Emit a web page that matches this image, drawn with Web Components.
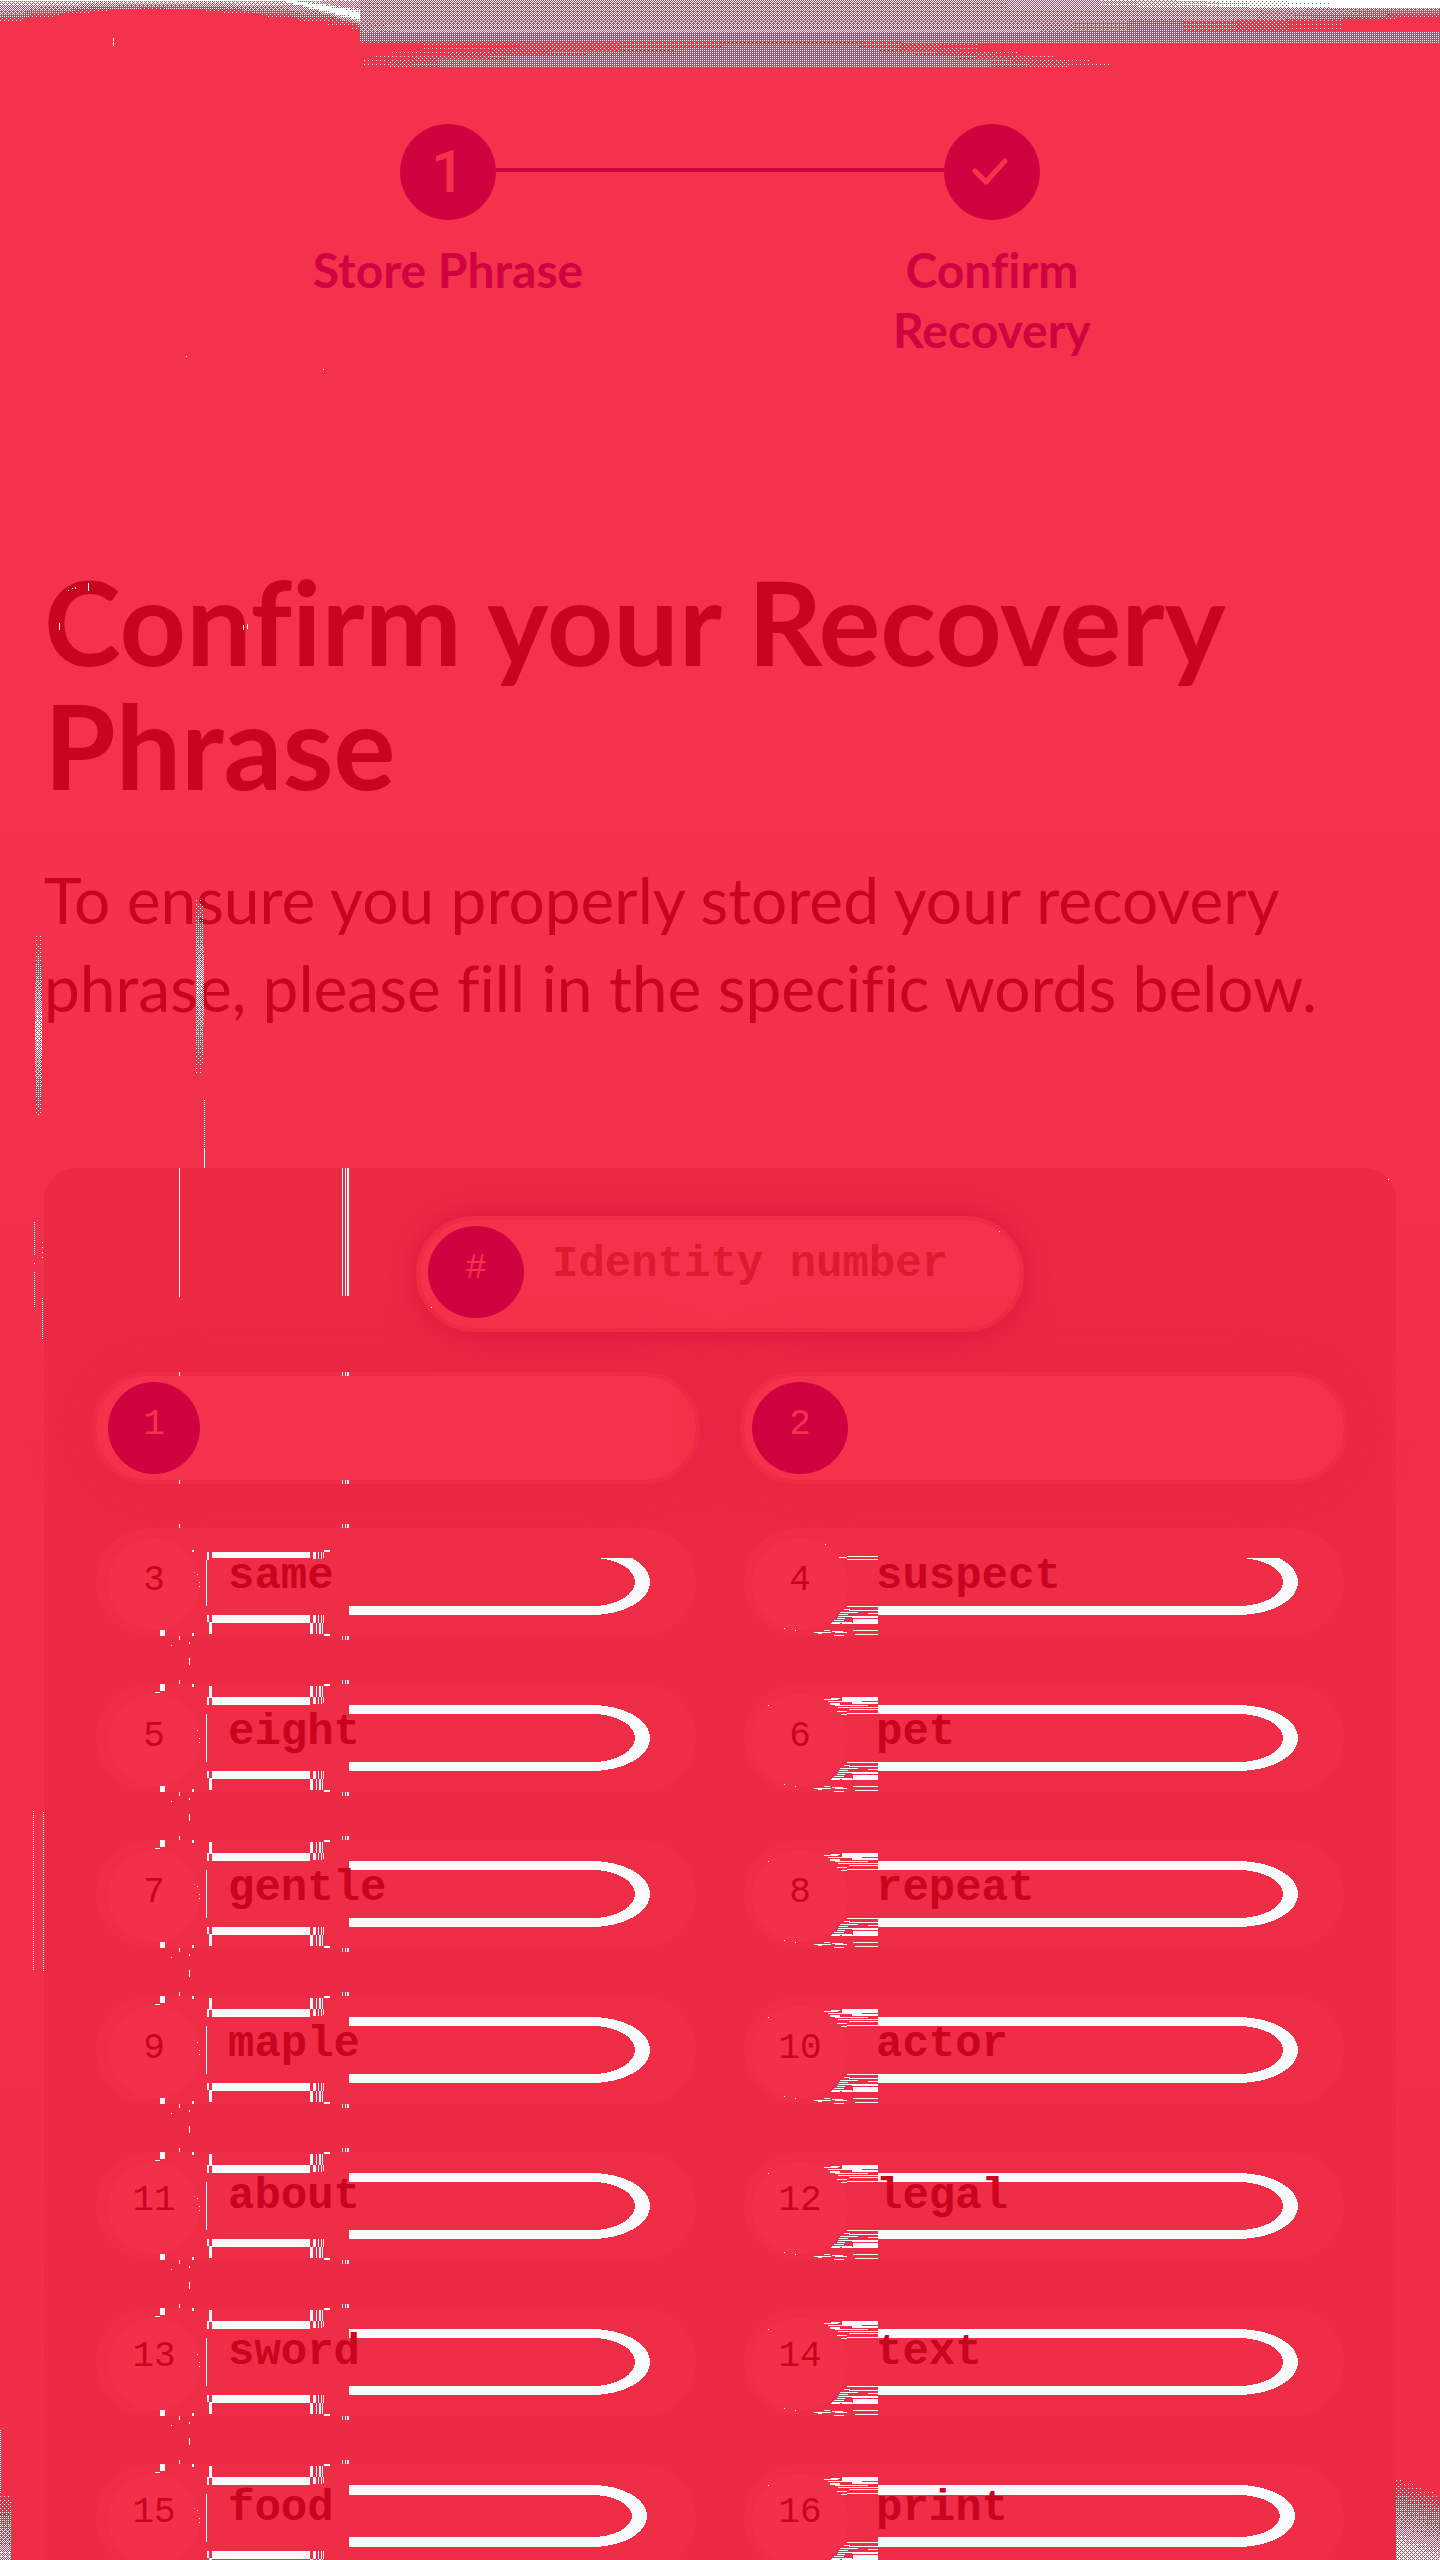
<!DOCTYPE html>
<html lang="en">
<head>
<meta charset="utf-8">
<meta name="viewport" content="width=device-width, initial-scale=1">
<title>Confirm your Recovery Phrase</title>
<style>
html,body{margin:0;height:100%}
body{font-family:Lato,"Open Sans",sans-serif;font-variant-ligatures:none;background:#f5324b;overflow:hidden}
</style>
</head>
<body>
<recovery-page></recovery-page>
<script>
class BaseElement extends HTMLElement{
  constructor(){super();this.attachShadow({mode:'open'});}
  draw(html){this.shadowRoot.innerHTML=html;}
}

/* Two-step progress indicator */
class StepProgress extends BaseElement{
  connectedCallback(){this.draw(`<style>
    :host{display:block;color:#cf0340}
    .rail{display:flex;align-items:center;width:640px;max-width:100%;margin:0 auto}
    .dot{width:96px;height:96px;border-radius:50%;background:#cf0340;color:#f5324b;display:flex;align-items:center;justify-content:center;font:500 60px/96px Roboto,sans-serif}
    .line{flex:1;height:4px;background:#cf0340;margin-bottom:4px}
    .labels{display:grid;grid-template-columns:1fr 1fr;max-width:1088px;margin:20px auto 0;font-size:48px;line-height:60px;font-weight:700;text-align:center}
    .labels span{padding:0 120px}
    svg{width:40px;height:32px}
  </style>
  <div class="rail"><div class="dot">1</div><div class="line"></div><div class="dot"><svg viewBox="0 0 40 32" fill="none" stroke="#f5324b" stroke-width="5" stroke-linecap="round" stroke-linejoin="round"><path d="M3 15 14 26 33 5"/></svg></div></div>
  <div class="labels"><span>Store Phrase</span><span>Confirm Recovery</span></div>`);}
}

/* Numbered pill with a text box */
class WordField extends BaseElement{
  connectedCallback(){
    const mark=this.getAttribute('mark'),value=this.getAttribute('value')||'',hint=this.getAttribute('hint')||'';
    const n=+mark,even=n%2===0,filled=value!=='';
    const kind=filled?'filled':(hint?'identity':'empty');
    this.draw(`<style>
    :host{display:block;min-width:0}
    .pill{position:relative;display:flex;align-items:flex-start;box-sizing:border-box;height:112px;padding:6px 16px 0 12px;border:4px solid #ef2c45;border-radius:58px;background:#f5324b;background-clip:padding-box}
    .right{padding-left:8px}
    .empty{box-shadow:0 0 72px rgba(220,20,64,.32)}
    .identity{height:116px;padding-left:8px;box-shadow:0 0 36px rgba(205,0,64,.55)}
    .filled{height:108px;margin:4px;border:0;padding-top:10px;background:#f02d46}
    label{flex:none;box-sizing:border-box;width:92px;height:92px;padding-bottom:8px;border-radius:50%;display:flex;align-items:center;justify-content:center;background:#cf0340;color:#f5324b;font:36px "Liberation Mono",monospace}
    .right label,.identity label{width:96px}
    .filled label{background:#f3304a;color:#c8041e}
    input{flex:1;min-width:0;box-sizing:border-box;height:96px;margin:0 0 0 28px;padding:0 0 20px;border:0;outline:0;background:none;color:#c8041e;font:bold 44px "Liberation Mono",monospace;position:relative}
    .late label{padding-bottom:16px}
    .late input{padding-bottom:28px}
    input::placeholder{color:#dc1a30;opacity:1}
    svg{position:absolute;left:-4px;top:-4px;width:608px;height:116px;overflow:visible;fill:#f9fafc;pointer-events:none}
    </style>
    <div class="pill ${kind} ${even?'right':''} ${n>10?'late':''}">
      ${this.marks(kind,n,even)}
      <label for="f">${mark}</label><input id="f" type="text" value="${value}" placeholder="${hint}" autocomplete="off">
    </div>`);
  }
  /* white streaks behind the word, in a 608x116 box */
  marks(kind,n,even){
    if(kind==='identity')return '';
    if(kind==='empty')return even?'':`<svg viewBox="0 0 608 116" shape-rendering="crispEdges"><path d="M87 0h1v4h-1zM250 0h1v4h-1zM253 0h1v4h-1zM255 0h2v4h-2zM87 108h1v4h-1zM250 108h1v4h-1zM253 108h1v4h-1zM255 108h2v4h-2z"/></svg>`;
    const first=n<5,last=n>14,t=25,b=last?87:91,w=last?10:9,cx=even?498:500,ex=last?555:558,x=even?138:257;
    const rx=ex-cx,ry=(b-t)/2,ix=rx-15,iy=ry-w;
    const loop=`<path clip-path="url(#c)" d="M${x} ${t}H${cx}A${rx} ${ry} 0 0 1 ${cx} ${b}H${x}v-${w}H${cx}A${ix} ${iy} 0 0 0 ${cx} ${t+w}H${x}z"/>`;
    const clip=`<clipPath id="c"><path d="${first?`M500 34H608V116H0V60H500z`:'M0 0H608V116H0z'}"/></clipPath>`;
    let bits;
    if(even){
      const low='M107 82h31v1h-31zM104 85h6v1h-6zM109 86h29v1h-29zM100 88h18v1h-18zM99 90h9v1h-9zM128 89h10v1h-10zM98 92h38v1h-38zM97 94h8v1h-8zM112 92h26v2h-26zM94 96h10v1h-10zM92 98h20v1h-20zM113 95h25v4h-25zM91 99h9v1h-9zM102 99h36v1h-36zM84 106h6v1h-6zM113 106h25v1h-25zM92 107h11v1h-11zM74 108h17v1h-17zM78 109h4v1h-4zM95 108h12v1h-12zM115 110h23v1h-23zM94 111h10v1h-10zM44 104h1v1h-1zM55 106h1v1h-1z';
      const top=first?'M99 33h8v1h-8zM107 32h31v1h-31zM107 35h31v1h-31zM85 20h1v1h-1z':'M102 17h36v4h-36zM91 18h9v1h-9zM84 19h14v1h-14zM88 21h34v1h-34zM112 22h26v2h-26zM90 23h10v2h-10zM95 25h33v1h-33zM98 27h40v1h-40zM109 29h29v1h-29zM97 31h10v1h-10zM107 33h31v1h-31zM101 34h6v1h-6zM28 25h1v1h-1z';
      bits=low+top;
    }else{
      const e=first?28:17;
      bits=`M115 ${e}h2v8h-2zM120 ${e}h98v${first?6:8}h-98zM221 ${e}h3v7h-3zM226 ${e}h1v7h-1zM229 ${e}h1v7h-1zM231 ${e}h1v6h-1z`
      +`M115 91h2v7h-2zM120 91h98v8h-98zM221 91h3v8h-3zM226 91h1v8h-1zM229 91h1v8h-1zM231 91h1v8h-1z`
      +`M117 98h3v12h-3zM218 99h3v11h-3zM224 99h1v11h-1zM227 99h2v11h-2zM230 99h1v11h-1zM232 110h6v2h-6z`
      +`M114 ${first?36:34}h1v${first?46:48}h-1zM68 106h5v6h-5zM100 109h2v3h-2zM105 50h1v1h-1zM107 58h1v1h-1zM107 62h1v1h-1z`
      +(first?'M232 26h6v2h-6zM100 26h2v2h-2z':'M117 6h3v12h-3zM218 6h3v11h-3zM224 6h1v11h-1zM227 6h2v11h-2zM230 6h1v11h-1zM232 4h6v2h-6zM68 4h5v7h-5zM63 12h5v1h-5zM100 4h2v3h-2z')
      +'M87 0h1v4h-1zM250 0h1v4h-1zM253 0h1v4h-1zM255 0h2v4h-2zM87 112h1v4h-1zM250 112h1v4h-1zM253 112h1v4h-1zM255 112h2v4h-2zM97 118h1v2h-1zM79 121h1v1h-1zM97 134h1v7h-1z';
    }
    return `<svg viewBox="0 0 608 116" shape-rendering="crispEdges">${clip}${loop}<path d="${bits}"/></svg>`;
  }
}

/* Rounded panel that holds the word fields */
class PhraseCard extends BaseElement{
  connectedCallback(){this.draw(`<style>
    :host{display:block;background:#ed2a44;border-radius:32px 32px 0 0;padding:48px}
    .top{width:50%;max-width:608px;margin:0 auto 40px}
    .grid{display:grid;grid-template-columns:1fr 1fr;gap:40px}
    .streaks{position:absolute;width:400px;height:130px;margin:-48px 0 0 -48px;fill:#fff}
  </style>
  <svg class="streaks" viewBox="0 0 400 130" shape-rendering="crispEdges"><path d="M135 0h1v129h-1zM298 0h1v128h-1zM301 0h1v128h-1zM303 0h2v128h-2z"/></svg>
  <div class="top"><slot name="identity"></slot></div>
  <div class="grid"><slot></slot></div>`);}
}

/* Dithered white grain laid over the page */
class GrainLayer extends BaseElement{
  connectedCallback(){
    this.draw(`<style>:host{position:absolute;inset:0;pointer-events:none}canvas{display:block}</style><canvas></canvas>`);
    const c=this.shadowRoot.querySelector('canvas'),W=c.width=innerWidth,H=c.height=innerHeight,g=c.getContext('2d');
    g.fillStyle='#fff';
    const B=[0,8,2,10,12,4,14,6,3,11,1,9,15,7,13,5];
    const dot=(x0,y0,x1,y1,f)=>{for(let y=y0;y<y1;y++)for(let x=x0;x<x1;x++)if(f(x,y)*16>B[(y&3)*4+(x&3)]+.5)g.fillRect(x,y,1,1);};
    const clamp=v=>Math.max(0,Math.min(1,v));
    dot(0,0,360,36,(x,y)=>{
      const edge=x<150?24-14*Math.sin(x/150*Math.PI/2):10+22*Math.pow((x-150)/210,2);
      const wedge=x>285?clamp(1-Math.abs(y-(x-285)*.2)/(4+(x-285)*.11))*1.2:0;
      return clamp(Math.max((edge-y)/edge*.75*(x>320?.75:1),wedge));
    });
    dot(360,0,W,8,(x,y)=>(x<1000?.38:.38+clamp((x-1000)/400)*.62)+(y&1)*.08);
    dot(360,8,W,20,(x,y)=>x<1250?.42:.42*clamp(1-(x-1250)/190*clamp((y-8)/9)));
    dot(360,20,W,32,(x,y)=>x<1040?.38+.15*(y-20)/12*clamp((x-360)/60):.38*clamp(1-(x-1040)/330));
    dot(360,32,W,43,(x,y)=>x>900||y<40?(y%2===0&&x%2===0?1:0):.16);
    dot(360,43,1145,67,(x,y)=>{
      if(y%2)return 0;
      const low=clamp((y-48)/14);
      return .25*clamp((x-370)/(400-300*low)+low*.2)*clamp((1000+130*low-x)/160);
    });
    dot(35,929,42,1116,(x,y)=>.65*clamp(1-Math.abs(y-1030)/100));
    dot(196,897,204,1080,(x,y)=>.6*clamp(1-Math.abs(y-985)/95));
    dot(0,2494,11,H,(x,y)=>.6*clamp((y-2490)/70));
    dot(1396,2478,W,H,(x,y)=>.6*clamp((y-2475-(x-1396)*.35)/65));
    const r=(...a)=>a.forEach(v=>g.fillRect(...v));
    for(let y=1100;y<1150;y+=2)r([204,y,1,1]);
    r([204,1148,1,20]);
    for(let y=1222;y<1308;y+=y>1252&&y<1272?9:2)r([34,y,1,1]);
    for(let y=1242;y<1262;y+=5)r([42,y,1,1]);
    for(let y=1298;y<1340;y+=2)r([42,y,1,1]);
    for(let y=1811;y<1970;y+=2)r([33,y,1,1],[43,y+1,1,1]);
    for(let y=2430;y<2494;y+=2)r([0,y,1,1]);
    r([113,38,1,3],[113,42,1,4],[186,356,1,1],[323,369,1,1],[88,583,1,8],[59,623,1,7],[68,590,1,1],[72,588,1,1],[75,587,1,2],[243,625,1,5],[247,624,1,5],[1388,1179,1,1],[999,1231,1,1],[431,1307,1,1]);
  }
}

class RecoveryPage extends BaseElement{
  connectedCallback(){
    const words=['','','same','suspect','eight','pet','gentle','repeat','maple','actor','about','legal','sword','text','food','print'];
    this.draw(`<style>
    :host{display:block;position:relative;height:100vh;overflow:hidden;box-sizing:border-box;padding:124px 44px 0;background:linear-gradient(#f5324b 0,#f5324b 30%,#f2304a 50%,#f02e47 100%)}
    h1{margin:200px 0 48px;font-size:116px;line-height:124px;font-weight:700;color:#c8041e}
    p{margin:0 0 136px;font-size:64px;line-height:88px;color:#c8041e}
    </style>
    <step-progress></step-progress>
    <h1>Confirm your Recovery Phrase</h1>
    <p>To ensure you properly stored your recovery phrase, please fill in the specific words below.</p>
    <phrase-card>
      <word-field slot="identity" mark="#" hint="Identity number"></word-field>
      ${words.map((w,i)=>`<word-field mark="${i+1}" value="${w}"></word-field>`).join('')}
    </phrase-card>
    <grain-layer></grain-layer>`);
  }
}
customElements.define('step-progress',StepProgress);
customElements.define('word-field',WordField);
customElements.define('phrase-card',PhraseCard);
customElements.define('grain-layer',GrainLayer);
customElements.define('recovery-page',RecoveryPage);
</script>
</body>
</html>
